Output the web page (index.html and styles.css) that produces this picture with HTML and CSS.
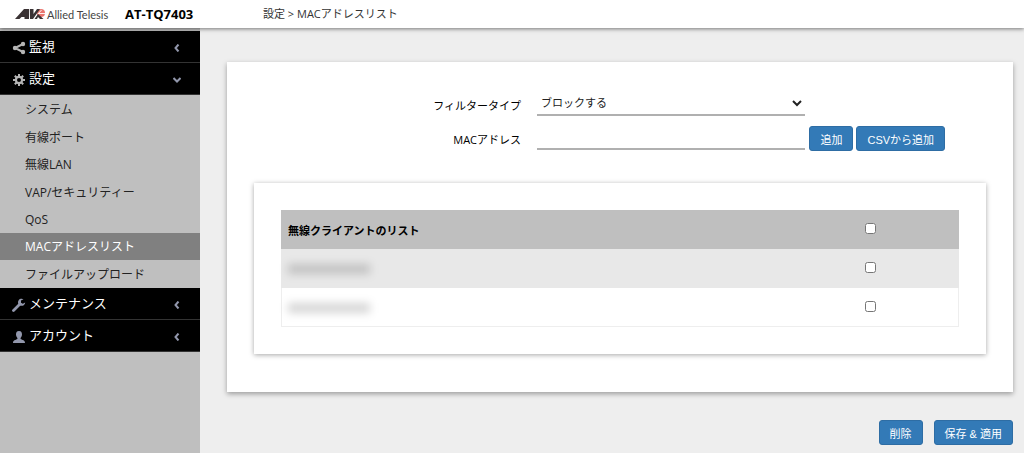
FILE: index.html
```html
<!DOCTYPE html>
<html lang="ja">

<head>
    <meta charset="UTF-8">
    <meta name="viewport" content="width=device-width, initial-scale=1.0">
    <title>AT-TQ7403</title>
    <link rel="stylesheet" href="styles.css">
</head>

<body>
    <header class="header">
        <div class="brand">
            <a href="#" class="logo">
                <svg width="32" height="12" viewBox="0 0 32 12" aria-hidden="true">
                    <path d="M0 11 L9 1 H14 V11 H9.500 V9 H6.500 L4.500 11 Z" fill="#3a3234" />
                    <circle cx="26" cy="5" r="4" fill="#e9766f" />
                    <path d="M14.800 1 H18.500 V6 L22 1 H25 L18 11 H15 Z" fill="#3a3234" />
                    <path d="M19.500 11 L23 6 L28.500 11 H25 L23 9 L22 11 Z" fill="#3a3234" />
                    <path d="M23 6 L26.500 2 M24 5.500 H30" stroke="#fff" stroke-width=".9" />
                </svg>
                <span>Allied Telesis</span>
            </a>
            <span class="model">AT-TQ7403</span>
        </div>
        <div class="breadcrumb">設定 &gt; MACアドレスリスト</div>
    </header>

    <div class="page">
        <nav class="sidebar">
            <a href="#" class="menu">
                <svg class="icon" viewBox="0 0 14 14">
                    <path d="M11 3 L3 7 L11 11" fill="none" stroke="#b5b5b5" stroke-width="2" />
                    <circle cx="11" cy="3" r="2.200" fill="#b5b5b5" />
                    <circle cx="3" cy="7" r="2.200" fill="#b5b5b5" />
                    <circle cx="11" cy="11" r="2.200" fill="#b5b5b5" />
                </svg>
                <span class="menu-name">監視</span>
                <svg class="arrow" viewBox="0 0 8 8"><path d="M5.500 .5 L2.500 4 L5.500 7.500" /></svg>
            </a>
            <a href="#" class="menu">
                <svg class="icon" viewBox="0 0 14 14">
                    <path d="M7 1 V13 M1 7 H13 M2.800 2.800 L11.200 11.200 M11.200 2.800 L2.800 11.200" stroke="#b5b5b5" stroke-width="2" />
                    <circle cx="7" cy="7" r="4.200" fill="#b5b5b5" />
                    <circle cx="7" cy="7" r="2" fill="#000" />
                </svg>
                <span class="menu-name">設定</span>
                <svg class="arrow" viewBox="0 0 8 8"><path d="M.5 2 L4 5.500 L7.500 2" /></svg>
            </a>
            <div class="submenu">
                <a href="#">システム</a>
                <a href="#">有線ポート</a>
                <a href="#">無線LAN</a>
                <a href="#">VAP/セキュリティー</a>
                <a href="#">QoS</a>
                <a href="#" class="active">MACアドレスリスト</a>
                <a href="#">ファイルアップロード</a>
            </div>
            <a href="#" class="menu">
                <svg class="icon" viewBox="0 0 14 14">
                    <path d="M1.500 12.500 L8 6" stroke="#9297ac" stroke-width="2.800" stroke-linecap="round" />
                    <path d="M11.500 1.200 A3.600 3.600 0 1 0 13.200 4.500 L10.800 5.800 L9 4.800 V2.600 Z" fill="#9297ac" />
                </svg>
                <span class="menu-name">メンテナンス</span>
                <svg class="arrow" viewBox="0 0 8 8"><path d="M5.500 .5 L2.500 4 L5.500 7.500" /></svg>
            </a>
            <a href="#" class="menu">
                <svg class="icon" viewBox="0 0 14 14">
                    <path d="M7 1 C4.600 1 4 2.600 4 4.500 C4 6 4.800 7.200 5.400 8 V9 C3.500 10 1 10 1 13 H13 C13 10 10.500 10 8.600 9 V8 C9.200 7.200 10 6 10 4.500 C10 2.600 9.400 1 7 1 Z" fill="#9297ac" />
                </svg>
                <span class="menu-name">アカウント</span>
                <svg class="arrow" viewBox="0 0 8 8"><path d="M5.500 .5 L2.500 4 L5.500 7.500" /></svg>
            </a>
        </nav>

        <main class="main">
            <div class="card">
                <div class="form">
                    <label for="filterType">フィルタータイプ</label>
                    <select id="filterType" class="field">
                        <option>ブロックする</option>
                    </select>
                    <div></div>
                    <label for="macAddress">MACアドレス</label>
                    <input id="macAddress" class="field" type="text">
                    <div class="add-buttons">
                        <button class="btn" type="button">追加</button>
                        <button class="btn" type="button">CSVから追加</button>
                    </div>
                </div>

                <div class="card list-card">
                    <table>
                        <thead>
                            <tr>
                                <th>無線クライアントのリスト</th>
                                <th class="check"><input type="checkbox" aria-label="すべて選択"></th>
                            </tr>
                        </thead>
                        <tbody>
                            <tr>
                                <td><span class="masked"></span></td>
                                <td class="check"><input type="checkbox" aria-label="クライアント 1"></td>
                            </tr>
                            <tr>
                                <td><span class="masked"></span></td>
                                <td class="check"><input type="checkbox" aria-label="クライアント 2"></td>
                            </tr>
                        </tbody>
                    </table>
                </div>
            </div>

            <div class="actions">
                <button class="btn" type="button">削除</button>
                <button class="btn" type="button">保存 &amp; 適用</button>
            </div>
        </main>
    </div>
</body>

</html>
```
FILE: styles.css
```css
* {
    box-sizing: border-box;
}

body {
    margin: 0;
    min-height: 100vh;
    display: flex;
    flex-direction: column;
    font-family: "Open Sans", "Noto Sans CJK JP", sans-serif;
    font-size: 11px;
    color: #000;
    background: #eee;
}

a {
    color: inherit;
    text-decoration: none;
}

.header {
    display: flex;
    align-items: center;
    height: 28px;
    background: #fff;
    box-shadow: 0 1px 4px rgba(0, 0, 0, 0.5);
    position: relative;
}

.brand {
    display: flex;
    align-items: center;
    gap: 14px;
    width: 263px;
    padding-left: 15px;
}

.logo {
    display: flex;
    align-items: center;
    font-family: Lato, sans-serif;
    color: #444;
}

.logo span {
    width: 64px;
    white-space: nowrap;
}

.model {
    font-size: 13px;
    font-weight: bold;
}

.breadcrumb {
    color: #333;
    padding-bottom: 2px;
}

.page {
    flex: 1;
    display: flex;
}

/* sidebar */
.sidebar {
    width: 200px;
    padding-top: 3px;
    background: #bfbfbf;
    flex-shrink: 0;
}

.menu {
    display: flex;
    align-items: center;
    height: 32px;
    padding: 0 19px 2px 12px;
    background: #000;
    border-bottom: 1px solid #333;
    color: #fff;
    font-size: 13px;
}

.icon {
    width: 14px;
    height: 14px;
    margin-top: 4px;
}

.menu-name {
    flex: 1;
    padding-left: 3px;
}

.arrow {
    width: 8px;
    height: 8px;
    margin-top: 4px;
    fill: none;
    stroke: #9297ac;
    stroke-width: 2;
}

.submenu {
    display: flex;
    flex-direction: column;
    min-height: 193px;
    font-size: 12px;
    color: #222;
}

.submenu a {
    flex: 1;
    display: flex;
    align-items: center;
    padding-left: 25px;
}

.submenu .active {
    background: #808080;
    color: #fff;
}

/* content */
.main {
    flex: 1;
    padding: 34px 11px 8px 27px;
}

.card {
    padding: 28px 27px 38px;
    background: #fff;
    box-shadow: 0 2px 5px rgba(0, 0, 0, 0.35);
}

.form {
    display: grid;
    grid-template-columns: 58fr 55fr 37fr;
    row-gap: 8px;
}

.form label {
    padding: 7px 16px 0 0;
    text-align: right;
}

.field {
    width: 100%;
    height: 26px;
    padding: 0;
    border: 0;
    border-bottom: 2px solid #b0b0b0;
    border-radius: 0;
    background: #fff;
    font: inherit;
    color: #222;
}

.add-buttons {
    display: flex;
    gap: 3px;
    padding: 2px 0 0 4px;
}

.btn {
    height: 25px;
    padding: 0 10px;
    border: 1px solid #2e6da4;
    border-radius: 3px;
    background: #337ab7;
    color: #fff;
    font-family: "Liberation Sans", "Noto Sans CJK JP", sans-serif;
    font-size: 11px;
    white-space: nowrap;
}

.list-card {
    margin-top: 32px;
    padding: 27px;
    box-shadow: 0 1px 5px rgba(0, 0, 0, 0.35);
}

table {
    width: 100%;
    border-spacing: 0;
    box-shadow: inset 0 0 0 1px #eee;
}

th,
td {
    height: 39px;
    padding: 0 7px;
    text-align: left;
}

th {
    background: #bfbfbf;
}

tbody tr:nth-child(odd) {
    background: #e8e8e8;
}

.check {
    width: 26%;
    text-align: center;
}

.check input {
    margin: 0;
    width: 11px;
    height: 11px;
}

.masked {
    display: block;
    width: 82px;
    height: 10px;
    background: rgba(0, 0, 0, 0.16);
    filter: blur(4px);
}

.actions {
    display: flex;
    justify-content: flex-end;
    gap: 11px;
    margin-top: 28px;
}
```
